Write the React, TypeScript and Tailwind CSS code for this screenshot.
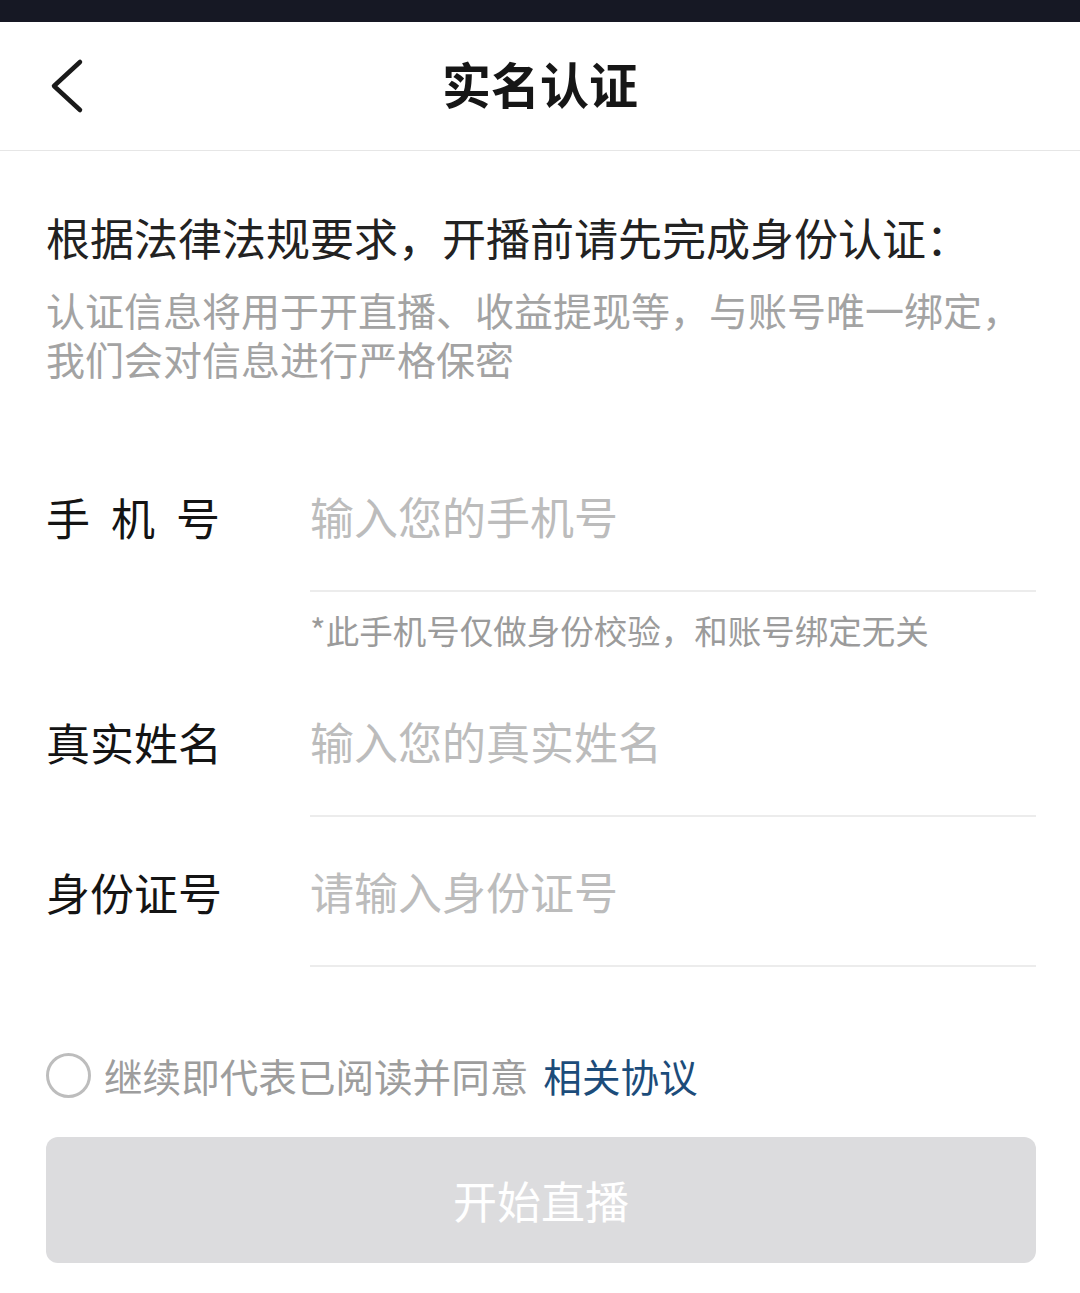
const font = { fontFamily: '"Noto Sans CJK SC", "Noto Sans", sans-serif' };

function BackIcon() {
  return (
    <svg width="40" height="56" viewBox="0 0 40 56" fill="none">
      <polyline
        points="32,4 6,28 32,52"
        stroke="#1a1a1a"
        strokeWidth="4.5"
        strokeLinecap="round"
        strokeLinejoin="round"
      />
    </svg>
  );
}

interface FieldRowProps {
  label: React.ReactNode;
  placeholder: string;
  note?: string;
}

function FieldRow({ label, placeholder, note }: FieldRowProps) {
  return (
    <div className="flex items-start">
      <div className="w-[264px] h-[150px] flex items-center text-[44px] leading-[56px] text-[#141414]">
        {label}
      </div>
      <div className="flex-1">
        <div className="h-[150px] flex items-center border-b-2 border-[#ececec]">
          <input
            className="w-full bg-transparent outline-none text-[44px] leading-[56px] text-[#222] placeholder:text-[#bcbcbc]"
            placeholder={placeholder}
          />
        </div>
        {note && (
          <div className="mt-[16px] text-[33.5px] leading-[44px] text-[#9b9b9b]">{note}</div>
        )}
      </div>
    </div>
  );
}

export default function App() {
  return (
    <div className="w-full min-h-[1293px] bg-white" style={font}>
      <div className="h-[22px] bg-[#161824]" />
      <header className="h-[129px] grid grid-cols-[1fr_auto_1fr] items-center border-b border-[#e6e6e6]">
        <div className="pl-[48px] flex items-center">
          <BackIcon />
        </div>
        <h1 className="-mt-[6px] text-[49px] leading-[60px] font-bold text-[#161616]">实名认证</h1>
        <div />
      </header>

      <main className="pl-[46px] pr-[44px]">
        <p className="pt-[58px] text-[44px] leading-[56px] text-[#222]">
          根据法律法规要求，开播前请先完成身份认证：
        </p>
        <p className="mt-[20px] text-[39px] leading-[49px] text-[#a3a3a3]">
          认证信息将用于开直播、收益提现等，与账号唯一绑定，
          <br />
          我们会对信息进行严格保密
        </p>

        <div className="mt-[59px]">
          <FieldRow
            label={
              <span className="w-[174px] flex justify-between">
                <span>手</span>
                <span>机</span>
                <span>号</span>
              </span>
            }
            placeholder="输入您的手机号"
            note="*此手机号仅做身份校验，和账号绑定无关"
          />
          <div className="mt-[15px]">
            <FieldRow label="真实姓名" placeholder="输入您的真实姓名" />
          </div>
          <FieldRow label="身份证号" placeholder="请输入身份证号" />
        </div>

        <label className="mt-[83px] flex items-center h-[50px]">
          <span className="w-[45px] h-[45px] rounded-full border-[3px] border-[#bdbdbd] shrink-0" />
          <span className="ml-[13px] text-[38.6px] leading-[50px] text-[#9d9d9d]">
            继续即代表已阅读并同意
            <span className="ml-[15px] text-[#1c4c7a]">相关协议</span>
          </span>
        </label>

        <button className="mt-[37px] w-full h-[126px] rounded-[12px] bg-[#dcdcde] text-white text-[44px] leading-[56px]">
          开始直播
        </button>
      </main>
    </div>
  );
}
